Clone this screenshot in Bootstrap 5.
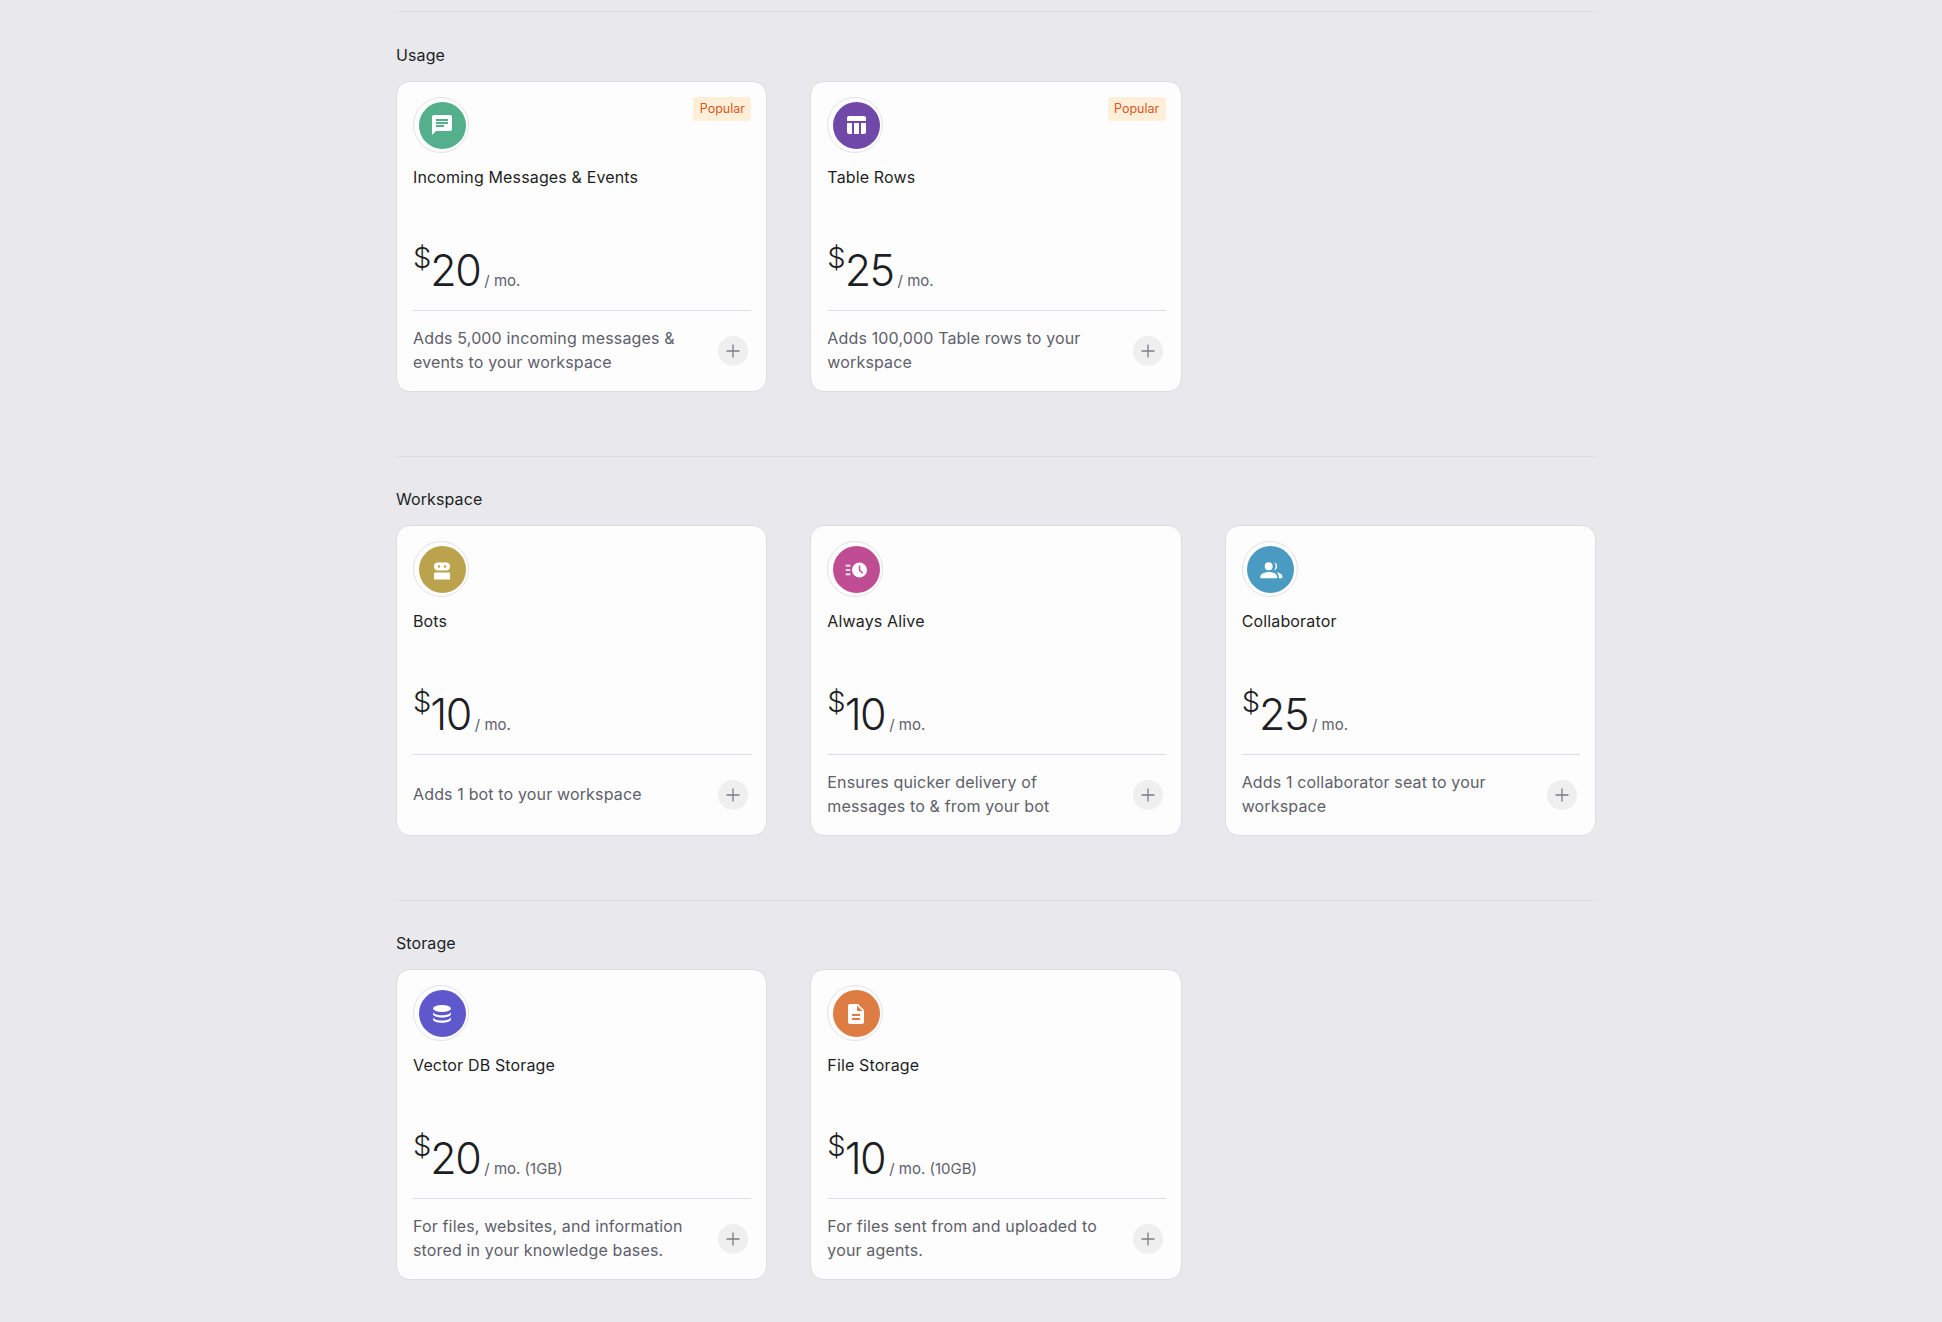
<!DOCTYPE html>
<html lang="en">
<head>
  <meta charset="UTF-8" />
  <meta name="viewport" content="width=device-width, initial-scale=1.0"/>
  <title>Add-ons</title>
  <link href="https://cdn.jsdelivr.net/npm/bootstrap@5.3.3/dist/css/bootstrap.min.css" rel="stylesheet">
  <style>
    body {
      background: #e8e8ed;
      color: #1d1f24;
      font-family: Inter, "Noto Sans", sans-serif;
      font-size: 16px;
      line-height: 24px;
      letter-spacing: .15px;
    }
    .addons-page { width: 1200px; margin: 0 0 0 396px; padding-top: 11.4px; }
    .addon-section { height: 444.2px; border-top: 1px solid #dcdce3; padding-top: 30.6px; }
    .addon-section h2 { font-size: 16px; line-height: 24px; font-weight: 400; letter-spacing: .1px; margin: 0 0 14px; }
    .addon-grid { display: grid; grid-template-columns: repeat(3, 1fr); gap: 43px; }
    .addon-card {
      height: 311px;
      background: #fdfdfd;
      border: 1px solid #dcdce3;
      border-radius: 14px;
      padding: 15px 15px 17px 16px;
    }
    .icon-ring { width: 56px; height: 56px; border: 1px solid #e2e2e8; border-radius: 50%; padding: 4px 3.5px 3px; }
    .icon-disc { width: 47px; height: 47px; margin-left: 1px; border-radius: 50%; color: #fff; }
    .icon-disc svg { width: 24px; height: 24px; fill: currentColor; }
    .disc-green { background: #54af8c; }
    .disc-purple { background: #7048a8; }
    .disc-gold { background: #bba24c; }
    .disc-pink { background: #c04d94; }
    .disc-blue { background: #4a9bc2; }
    .disc-indigo { background: #5f58cd; }
    .disc-orange { background: #dd7d43; }
    .popular-tag {
      height: 24px;
      width: 58px;
      background: #ffefd9;
      color: #d9581c;
      border-radius: 4px;
      font-size: 12.5px;
      line-height: 24px;
      letter-spacing: 0;
      text-align: center;
    }
    .addon-title { margin-top: 12px; }
    .price-row { margin-top: auto; height: 48px; line-height: 48px; }
    .price-cur { font-size: 29px; font-weight: 300; line-height: 30px; align-self: flex-start; margin-top: -3px; letter-spacing: 0; }
    .price-num { font-size: 43px; font-weight: 300; letter-spacing: -1.5px; margin-left: -1px; margin-right: 4px; }
    .price-per { font-size: 15px; color: #5e5f6a; letter-spacing: 0; }
    .addon-foot { border-top: 1px solid #dcdce3; margin-top: 16px; padding-top: 15px; min-height: 64px; }
    .addon-desc { color: #5e5f6a; width: 270px; min-height: 48px; }
    .plus-btn {
      width: 30px;
      height: 30px;
      padding: 0;
      border: 0;
      border-radius: 50%;
      background: #efefef;
      margin: 2px 3px 0 0;
    }
    .plus-btn svg { display: block; margin: auto; width: 14px; height: 14px; stroke: #7c7c85; stroke-width: 1.3; }
  </style>
</head>
<body>
  <div class="addons-page">

    <section class="addon-section">
      <h2>Usage</h2>
      <div class="addon-grid">
        <div class="addon-card d-flex flex-column">
          <div class="d-flex justify-content-between align-items-start">
            <div class="icon-ring"><div class="icon-disc disc-green d-flex align-items-center justify-content-center">
              <svg viewBox="0 0 24 24"><path d="M20 2H4c-1.1 0-2 .9-2 2v18l4-4h14c1.1 0 2-.9 2-2V4c0-1.1-.9-2-2-2zM6 9h12v2H6V9zm8 5H6v-2h8v2zm4-6H6V6h12v2z"/></svg>
            </div></div>
            <div class="popular-tag">Popular</div>
          </div>
          <div class="addon-title">Incoming Messages &amp; Events</div>
          <div class="price-row d-flex align-items-baseline"><span class="price-cur">$</span><span class="price-num">20</span><span class="price-per">/ mo.</span></div>
          <div class="addon-foot d-flex justify-content-between align-items-center">
            <div class="addon-desc d-flex align-items-center">Adds 5,000 incoming messages &amp; events to your workspace</div>
            <button class="plus-btn" type="button"><svg viewBox="0 0 14 14"><path d="M7 .5v13M.5 7h13"/></svg></button>
          </div>
        </div>
        <div class="addon-card d-flex flex-column">
          <div class="d-flex justify-content-between align-items-start">
            <div class="icon-ring"><div class="icon-disc disc-purple d-flex align-items-center justify-content-center">
              <svg viewBox="0 0 24 24"><path d="M10 10.02h5V21h-5zM17 21h3c1.1 0 2-.9 2-2v-9h-5v11zm3-18H5c-1.1 0-2 .9-2 2v3h19V5c0-1.1-.9-2-2-2zM3 19c0 1.1.9 2 2 2h3V10H3v9z"/></svg>
            </div></div>
            <div class="popular-tag">Popular</div>
          </div>
          <div class="addon-title">Table Rows</div>
          <div class="price-row d-flex align-items-baseline"><span class="price-cur">$</span><span class="price-num">25</span><span class="price-per">/ mo.</span></div>
          <div class="addon-foot d-flex justify-content-between align-items-center">
            <div class="addon-desc d-flex align-items-center">Adds 100,000 Table rows to your workspace</div>
            <button class="plus-btn" type="button"><svg viewBox="0 0 14 14"><path d="M7 .5v13M.5 7h13"/></svg></button>
          </div>
        </div>
      </div>
    </section>

    <section class="addon-section">
      <h2>Workspace</h2>
      <div class="addon-grid">
        <div class="addon-card d-flex flex-column">
          <div class="d-flex justify-content-between align-items-start">
            <div class="icon-ring"><div class="icon-disc disc-gold d-flex align-items-center justify-content-center">
              <svg viewBox="0 0 24 24"><path fill-rule="evenodd" d="M8 4.5h8a4 4 0 0 1 0 8H8a4 4 0 0 1 0-8zM9 7.3a1.2 1.2 0 1 0 0 2.4 1.2 1.2 0 0 0 0-2.4zm6 0a1.2 1.2 0 1 0 0 2.4 1.2 1.2 0 0 0 0-2.4z"/><path d="M5 14.5h14a1 1 0 0 1 1 1v6H4v-6a1 1 0 0 1 1-1z"/></svg>
            </div></div>
          </div>
          <div class="addon-title">Bots</div>
          <div class="price-row d-flex align-items-baseline"><span class="price-cur">$</span><span class="price-num">10</span><span class="price-per">/ mo.</span></div>
          <div class="addon-foot d-flex justify-content-between align-items-center">
            <div class="addon-desc d-flex align-items-center">Adds 1 bot to your workspace</div>
            <button class="plus-btn" type="button"><svg viewBox="0 0 14 14"><path d="M7 .5v13M.5 7h13"/></svg></button>
          </div>
        </div>
        <div class="addon-card d-flex flex-column">
          <div class="d-flex justify-content-between align-items-start">
            <div class="icon-ring"><div class="icon-disc disc-pink d-flex align-items-center justify-content-center">
              <svg viewBox="0 0 24 24"><path fill-rule="evenodd" d="M15.5 4.5a7.5 7.5 0 1 1 0 15 7.5 7.5 0 0 1 0-15zM14.8 7.5v5.100l3.400 3.200 1.100-1.100-3-2.800V7.500z"/><path d="M1.700 6.800h4.600v1.600H1.700zM1.700 11.200h4.600v1.600H1.700zM1.700 15.600h4.600v1.600H1.700z"/></svg>
            </div></div>
          </div>
          <div class="addon-title">Always Alive</div>
          <div class="price-row d-flex align-items-baseline"><span class="price-cur">$</span><span class="price-num">10</span><span class="price-per">/ mo.</span></div>
          <div class="addon-foot d-flex justify-content-between align-items-center">
            <div class="addon-desc d-flex align-items-center">Ensures quicker delivery of messages to &amp; from your bot</div>
            <button class="plus-btn" type="button"><svg viewBox="0 0 14 14"><path d="M7 .5v13M.5 7h13"/></svg></button>
          </div>
        </div>
        <div class="addon-card d-flex flex-column">
          <div class="d-flex justify-content-between align-items-start">
            <div class="icon-ring"><div class="icon-disc disc-blue d-flex align-items-center justify-content-center">
              <svg viewBox="0 0 24 24"><circle cx="9.700" cy="8.300" r="4"/><path d="M1.300 20.300v-1.800c0-3 5.400-4.500 8.400-4.500s8.400 1.500 8.400 4.500v1.800z"/><path d="M15 4.400a4 4 0 0 1 0 7.800c1-1 1.600-2.400 1.600-3.900S16 5.400 15 4.400z"/><path d="M17.500 14.300c2.900.5 5.800 1.800 5.800 4.200v1.800h-3.500v-1.800c0-1.700-.9-3.100-2.300-4.200z"/></svg>
            </div></div>
          </div>
          <div class="addon-title">Collaborator</div>
          <div class="price-row d-flex align-items-baseline"><span class="price-cur">$</span><span class="price-num">25</span><span class="price-per">/ mo.</span></div>
          <div class="addon-foot d-flex justify-content-between align-items-center">
            <div class="addon-desc d-flex align-items-center">Adds 1 collaborator seat to your workspace</div>
            <button class="plus-btn" type="button"><svg viewBox="0 0 14 14"><path d="M7 .5v13M.5 7h13"/></svg></button>
          </div>
        </div>
      </div>
    </section>

    <section class="addon-section">
      <h2>Storage</h2>
      <div class="addon-grid">
        <div class="addon-card d-flex flex-column">
          <div class="d-flex justify-content-between align-items-start">
            <div class="icon-ring"><div class="icon-disc disc-indigo d-flex align-items-center justify-content-center">
              <svg viewBox="0 0 24 24"><ellipse cx="12" cy="6.500" rx="9" ry="3.500"/><path d="M3 9.700c0 2 4 3.500 9 3.500s9-1.500 9-3.500v2.300c0 2-4 3.500-9 3.500s-9-1.500-9-3.500z"/><path d="M3 15c0 2 4 3.500 9 3.500s9-1.500 9-3.500v2.300c0 2-4 3.500-9 3.500s-9-1.500-9-3.500z"/></svg>
            </div></div>
          </div>
          <div class="addon-title">Vector DB Storage</div>
          <div class="price-row d-flex align-items-baseline"><span class="price-cur">$</span><span class="price-num">20</span><span class="price-per">/ mo. (1GB)</span></div>
          <div class="addon-foot d-flex justify-content-between align-items-center">
            <div class="addon-desc d-flex align-items-center">For files, websites, and information stored in your knowledge bases.</div>
            <button class="plus-btn" type="button"><svg viewBox="0 0 14 14"><path d="M7 .5v13M.5 7h13"/></svg></button>
          </div>
        </div>
        <div class="addon-card d-flex flex-column">
          <div class="d-flex justify-content-between align-items-start">
            <div class="icon-ring"><div class="icon-disc disc-orange d-flex align-items-center justify-content-center">
              <svg viewBox="0 0 24 24"><path d="M14 2H6c-1.100 0-1.990.9-1.990 2L4 20c0 1.100.89 2 1.990 2H18c1.100 0 2-.9 2-2V8l-6-6zm2 16H8v-2h8v2zm0-4H8v-2h8v2zm-3-5V3.500L18.500 9H13z"/></svg>
            </div></div>
          </div>
          <div class="addon-title">File Storage</div>
          <div class="price-row d-flex align-items-baseline"><span class="price-cur">$</span><span class="price-num">10</span><span class="price-per">/ mo. (10GB)</span></div>
          <div class="addon-foot d-flex justify-content-between align-items-center">
            <div class="addon-desc d-flex align-items-center">For files sent from and uploaded to your agents.</div>
            <button class="plus-btn" type="button"><svg viewBox="0 0 14 14"><path d="M7 .5v13M.5 7h13"/></svg></button>
          </div>
        </div>
      </div>
    </section>

  </div>
</body>
</html>
